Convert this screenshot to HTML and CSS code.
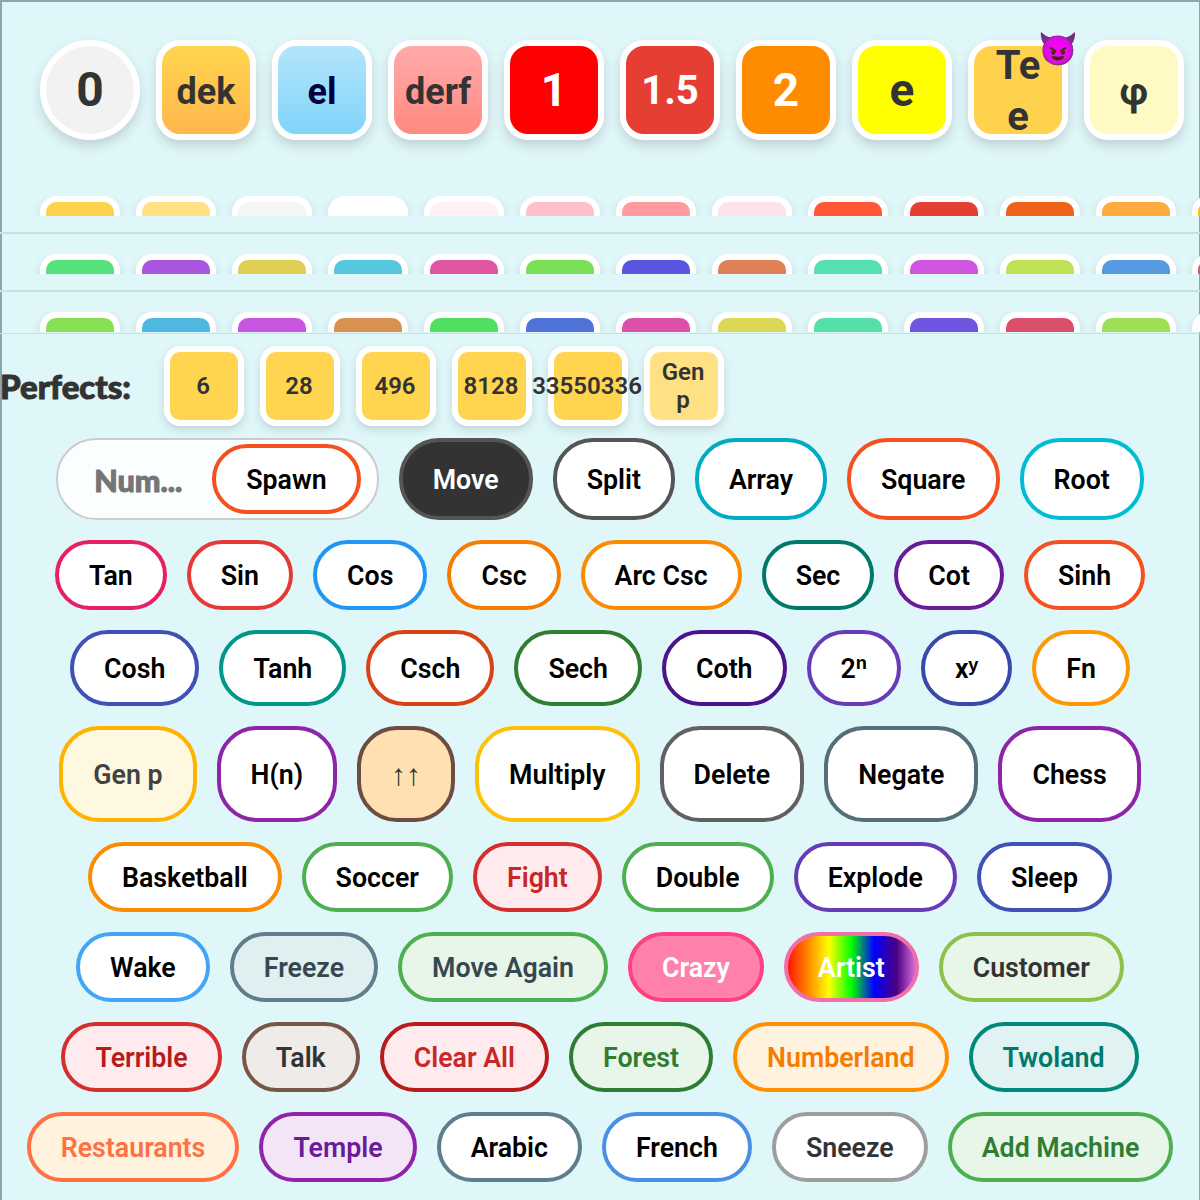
FILE: index.html
```html
<!DOCTYPE html>
<html lang="en">
<head>
<meta charset="utf-8">
<title>Numbers</title>
<link rel="stylesheet" href="styles.css">
</head>
<body>
<main class="screen">
  <section class="hero">
    <div class="tile t-zero">0</div>
    <div class="tile t-dek">dek</div>
    <div class="tile t-el">el</div>
    <div class="tile t-derf">derf</div>
    <div class="tile t-one">1</div>
    <div class="tile t-onehalf">1.5</div>
    <div class="tile t-two">2</div>
    <div class="tile t-e">e</div>
    <div class="tile t-tee">Te<br>e<span class="devil">😈</span></div>
    <div class="tile t-phi">φ</div>
  </section>

  <section class="strip strip-first">
    <div class="strip-clip">
      <i class="mini c1"></i><i class="mini c2"></i><i class="mini c3"></i><i class="mini c4"></i><i class="mini c5"></i><i class="mini c6"></i><i class="mini c7"></i><i class="mini c8"></i><i class="mini c9"></i><i class="mini c10"></i><i class="mini c11"></i><i class="mini c12"></i><i class="mini c13"></i>
    </div>
  </section>
  <section class="strip">
    <div class="strip-clip">
      <i class="mini d1"></i><i class="mini d2"></i><i class="mini d3"></i><i class="mini d4"></i><i class="mini d5"></i><i class="mini d6"></i><i class="mini d7"></i><i class="mini d8"></i><i class="mini d9"></i><i class="mini d10"></i><i class="mini d11"></i><i class="mini d12"></i><i class="mini d13"></i>
    </div>
  </section>
  <section class="strip strip-last">
    <div class="strip-clip">
      <i class="mini e1"></i><i class="mini e2"></i><i class="mini e3"></i><i class="mini e4"></i><i class="mini e5"></i><i class="mini e6"></i><i class="mini e7"></i><i class="mini e8"></i><i class="mini e9"></i><i class="mini e10"></i><i class="mini e11"></i><i class="mini e12"></i><i class="mini e13"></i>
    </div>
  </section>

  <section class="perfects">
    <h2 class="perfects-label">Perfects:</h2>
    <div class="ptile">6</div>
    <div class="ptile">28</div>
    <div class="ptile">496</div>
    <div class="ptile">8128</div>
    <div class="ptile">33550336</div>
    <div class="ptile ptile-gen">Gen<br>p</div>
  </section>

  <section class="controls">
    <div class="row row-first">
      <div class="spawner">
        <input class="num-input" type="text" placeholder="Num...">
        <button class="btn b-spawn">Spawn</button>
      </div>
      <button class="btn b-move">Move</button>
      <button class="btn b-split">Split</button>
      <button class="btn b-array">Array</button>
      <button class="btn b-square">Square</button>
      <button class="btn b-root">Root</button>
    </div>
    <div class="row">
      <button class="btn b-tan">Tan</button>
      <button class="btn b-sin">Sin</button>
      <button class="btn b-cos">Cos</button>
      <button class="btn b-csc">Csc</button>
      <button class="btn b-arccsc">Arc Csc</button>
      <button class="btn b-sec">Sec</button>
      <button class="btn b-cot">Cot</button>
      <button class="btn b-sinh">Sinh</button>
    </div>
    <div class="row row-sup">
      <button class="btn b-cosh">Cosh</button>
      <button class="btn b-tanh">Tanh</button>
      <button class="btn b-csch">Csch</button>
      <button class="btn b-sech">Sech</button>
      <button class="btn b-coth">Coth</button>
      <button class="btn b-pow2">2ⁿ</button>
      <button class="btn b-powx">xʸ</button>
      <button class="btn b-fn">Fn</button>
    </div>
    <div class="row row-tall">
      <button class="btn b-genp">Gen p</button>
      <button class="btn b-hn">H(n)</button>
      <button class="btn b-arrows">↑↑</button>
      <button class="btn b-multiply">Multiply</button>
      <button class="btn b-delete">Delete</button>
      <button class="btn b-negate">Negate</button>
      <button class="btn b-chess">Chess</button>
    </div>
    <div class="row">
      <button class="btn b-basketball">Basketball</button>
      <button class="btn b-soccer">Soccer</button>
      <button class="btn b-fight">Fight</button>
      <button class="btn b-double">Double</button>
      <button class="btn b-explode">Explode</button>
      <button class="btn b-sleep">Sleep</button>
    </div>
    <div class="row">
      <button class="btn b-wake">Wake</button>
      <button class="btn b-freeze">Freeze</button>
      <button class="btn b-again">Move Again</button>
      <button class="btn b-crazy">Crazy</button>
      <button class="btn b-artist">Artist</button>
      <button class="btn b-customer">Customer</button>
    </div>
    <div class="row">
      <button class="btn b-terrible">Terrible</button>
      <button class="btn b-talk">Talk</button>
      <button class="btn b-clear">Clear All</button>
      <button class="btn b-forest">Forest</button>
      <button class="btn b-numberland">Numberland</button>
      <button class="btn b-twoland">Twoland</button>
    </div>
    <div class="row">
      <button class="btn b-restaurants">Restaurants</button>
      <button class="btn b-temple">Temple</button>
      <button class="btn b-arabic">Arabic</button>
      <button class="btn b-french">French</button>
      <button class="btn b-sneeze">Sneeze</button>
      <button class="btn b-machine">Add Machine</button>
    </div>
  </section>
</main>
</body>
</html>
```
FILE: styles.css
```css
* { box-sizing: border-box; }
html, body { margin: 0; padding: 0; }
body { background: #e0f7fa; font-family: Roboto, "Liberation Sans", sans-serif; }

.screen {
  width: 1200px;
  height: 1200px;
  overflow: hidden;
  background: #e0f7fa;
  box-shadow: inset 2px 2px 0 #90a4ae, inset -1px 0 0 #90a4ae;
}

/* hero tiles */
.hero { display: flex; gap: 16px; padding: 40px 0 56px 40px; }
.tile {
  position: relative;
  flex: none;
  width: 100px;
  height: 100px;
  display: flex;
  align-items: center;
  justify-content: center;
  text-align: center;
  border: 6px solid #fff;
  border-radius: 24px;
  box-shadow: 0 6px 12px rgba(0, 0, 0, .15);
  color: #333;
  font-size: 36px;
  font-weight: 700;
}
.t-zero { border-radius: 50%; background: #f2f2f2; font-size: 48px; padding-bottom: 2px; }
.t-dek { background: linear-gradient(#ffd54f, #ffb74d); padding-top: 4px; }
.t-el { background: linear-gradient(#b3e5fc, #81d4fa); color: #00003c; padding-top: 4px; }
.t-derf { background: linear-gradient(#ffabab, #ff8a80); padding-top: 4px; }
.t-one { background: #f00; color: #fff; font-size: 46px; }
.t-onehalf { background: #e53f33; color: #fff; font-size: 40px; }
.t-two { background: #ff8c00; color: #fff; font-size: 46px; }
.t-e { background: #ff0; font-size: 46px; }
.t-tee { background: #ffd24d; font-size: 40px; line-height: 51px; padding-top: 2px; }
.t-phi { background: #fff9c4; font-size: 38px; padding-top: 3px; }
.devil {
  position: absolute;
  top: -16px;
  right: -16px;
  font-size: 32px;
  line-height: 38px;
}

/* clipped strips */
.strip { padding-top: 20px; padding-bottom: 16px; border-bottom: 2px solid #c6e0e5; }
.strip-first { padding-top: 0; }
.strip-last { padding-bottom: 1px; border-bottom-width: 1px; }
.strip-clip { display: flex; gap: 16px; height: 20px; overflow: hidden; padding-left: 40px; }
.mini {
  flex: none;
  width: 80px;
  height: 80px;
  border: 6px solid #fff;
  border-radius: 16px;
  box-shadow: 0 3px 8px rgba(0, 0, 0, .12);
}
.c1 { background: #ffd24d; } .c2 { background: #ffe082; } .c3 { background: #f5f5f5; }
.c4 { background: #fff; } .c5 { background: #fff0f5; } .c6 { background: #ffc0cb; }
.c7 { background: #ff9a9e; } .c8 { background: #fde4ec; } .c9 { background: #ff5733; }
.c10 { background: #e53f33; } .c11 { background: #ec6319; } .c12 { background: #ffaa3e; }
.c13 { background: #ffc107; }
.d1 { background: #55e27c; } .d2 { background: #a855e0; } .d3 { background: #e0cf55; }
.d4 { background: #55c8e0; } .d5 { background: #e055a0; } .d6 { background: #7ae055; }
.d7 { background: #5a55e0; } .d8 { background: #e08055; } .d9 { background: #55e0b0; }
.d10 { background: #d055e0; } .d11 { background: #c0e055; } .d12 { background: #5599e0; }
.d13 { background: #e05570; }
.e1 { background: #88e055; } .e2 { background: #4fb8e0; } .e3 { background: #c855e0; }
.e4 { background: #d9914f; } .e5 { background: #4fe060; } .e6 { background: #4f73d9; }
.e7 { background: #dd50aa; } .e8 { background: #dcd855; } .e9 { background: #55e0a8; }
.e10 { background: #7055e0; } .e11 { background: #d94f6c; } .e12 { background: #9de055; }
.e13 { background: #fff; }

/* perfects */
.perfects { display: flex; align-items: center; gap: 16px; padding-top: 12px; }
.perfects-label {
  flex: none;
  width: 148px;
  margin: 0;
  color: #333;
  font-family: Lato, sans-serif;
  font-size: 33px;
  font-weight: 900;
  -webkit-text-stroke: 1px #333;
}
.ptile {
  flex: none;
  width: 80px;
  height: 80px;
  padding-right: 2px;
  display: flex;
  align-items: center;
  justify-content: center;
  text-align: center;
  white-space: nowrap;
  background: #ffd54f;
  border: 6px solid #fff;
  border-radius: 16px;
  box-shadow: 0 4px 8px rgba(0, 0, 0, .14);
  color: #333;
  font-size: 24px;
  font-weight: 600;
  line-height: 28px;
}
.ptile-gen { background: #ffe082; }

/* button rows */
.controls { display: flex; flex-direction: column; gap: 20px; padding-top: 12px; }
.row { display: flex; justify-content: center; gap: 20px; }
.row-sup { min-height: 76px; }
.row-tall { min-height: 96px; }
.btn {
  flex: none;
  margin: 0;
  padding: 17px 30px 15px;
  border: 4px solid #888;
  border-radius: 40px;
  background: #fff;
  color: #000;
  font-family: inherit;
  font-size: 26.75px;
  font-weight: 600;
  line-height: 30px;
}
.row-sup .btn, .row-tall .btn { padding-top: 18px; padding-bottom: 16px; }

.spawner {
  display: flex;
  align-items: center;
  gap: 0;
  padding: 4px 16px 4px 36px;
  background: rgba(255, 255, 255, .85);
  border: 2px solid #ccc;
  border-radius: 40px;
}
.num-input {
  width: 118px;
  padding: 2px 0 0;
  border: 0;
  outline: 0;
  background: transparent;
  font-family: Lato, sans-serif;
  font-size: 30.5px;
  font-weight: 900;
  -webkit-text-stroke: 1px #757575;
}
.num-input::placeholder { color: #757575; opacity: 1; }

.b-spawn { border-color: #f4511e; }
.b-move { background: #333; border-color: #555; color: #fff; }
.b-split { border-color: #555; }
.b-array { border-color: #00acc1; }
.b-square { border-color: #f4511e; }
.b-root { border-color: #00bcd4; }
.b-tan { border-color: #e91e63; }
.b-sin { border-color: #e53935; }
.b-cos { border-color: #2196f3; }
.b-csc { border-color: #f57c00; }
.b-arccsc { border-color: #fb8c00; }
.b-sec { border-color: #00796b; }
.b-cot { border-color: #6a1b9a; }
.b-sinh { border-color: #f4511e; }
.b-cosh { border-color: #3f51b5; }
.b-tanh { border-color: #009688; }
.b-csch { border-color: #d84315; }
.b-sech { border-color: #2e7d32; }
.b-coth { border-color: #4a148c; }
.b-pow2 { border-color: #673ab7; }
.b-powx { border-color: #3949ab; }
.b-fn { border-color: #ff9800; }
.b-genp { background: #fff8e1; border-color: #ffb300; color: #424242; }
.b-hn { border-color: #8e24aa; }
.b-arrows { background: #ffe0b2; border-color: #6d4c41; color: #333; font-family: "Liberation Sans", sans-serif; font-size: 30px; }
.b-multiply { border-color: #ffc107; }
.b-delete { border-color: #616161; }
.b-negate { border-color: #546e7a; }
.b-chess { border-color: #8e24aa; }
.b-basketball { border-color: #fb8c00; }
.b-soccer { border-color: #4caf50; }
.b-fight { background: #ffebee; border-color: #d32f2f; color: #c62828; }
.b-double { border-color: #4caf50; }
.b-explode { border-color: #673ab7; }
.b-sleep { border-color: #3f51b5; }
.b-wake { border-color: #42a5f5; }
.b-freeze { background: #e0f0f0; border-color: #607d8b; color: #37474f; }
.b-again { background: #e8f5e9; border-color: #4caf50; color: #37474f; }
.b-crazy { background: #ff80ab; border-color: #ff4081; color: #fff; }
.b-artist {
  background: linear-gradient(to right, #f00, #ff7f00, #ff0, #0f0, #00f, #4b0082, #ee82ee);
  background-origin: border-box;
  border-color: #f06eaa;
  color: #fff;
}
.b-customer { background: #e8f5e9; border-color: #8bc34a; color: #333; }
.b-terrible { background: #ffebee; border-color: #d32f2f; color: #b71c1c; }
.b-talk { background: #efebe9; border-color: #795548; color: #333; }
.b-clear { background: #ffebee; border-color: #b71c1c; color: #c62828; }
.b-forest { background: #e8f5e9; border-color: #2e7d32; color: #2e7d32; }
.b-numberland { background: #fff3e0; border-color: #ff8f00; color: #f57c00; }
.b-twoland { background: #e0f2f1; border-color: #00897b; color: #00796b; }
.b-restaurants { background: #fff3e0; border-color: #ff7043; color: #ff7043; }
.b-temple { background: #f3e5f5; border-color: #8e24aa; color: #6a1b9a; }
.b-arabic { border-color: #607d8b; }
.b-french { border-color: #4a90e2; }
.b-sneeze { border-color: #9e9e9e; color: #333; }
.b-machine { background: #e8f5e9; border-color: #4caf50; color: #2e7d32; }
```
